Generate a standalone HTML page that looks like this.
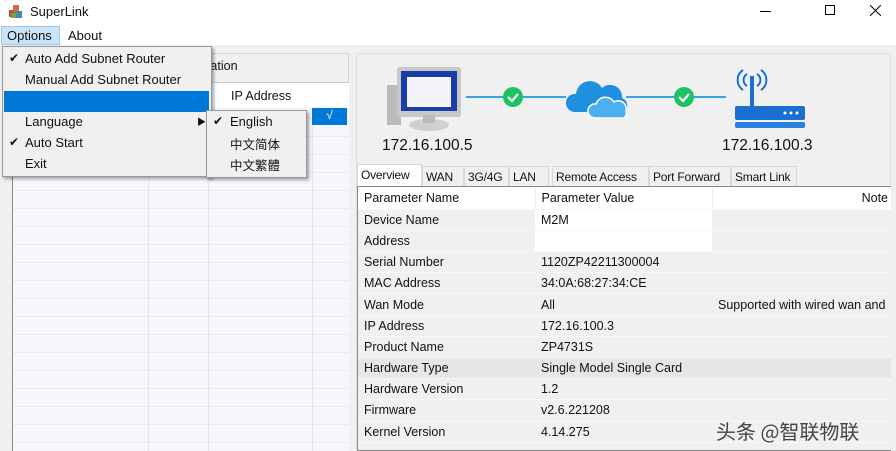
<!DOCTYPE html>
<html><head><style>
*{margin:0;padding:0;box-sizing:border-box}
body{width:896px;height:451px;overflow:hidden;background:#f0f0f0;font-family:"Liberation Sans","Noto Sans CJK SC",sans-serif;font-size:12.5px;color:#111;position:relative}
.a{position:absolute}
.title{left:0;top:0;width:896px;height:23px;background:#fff}
.menu{left:0;top:23px;width:896px;height:22px;background:#fff}
td{padding:0 6px;height:21.2px;border-bottom:1px solid #f7f7f7;white-space:nowrap;overflow:hidden}
table{border-collapse:collapse;table-layout:fixed}
.tab{position:absolute;top:166px;height:20px;border:1px solid #d9d9d9;border-bottom:none;background:#f0f0f0;padding:3px 3px;font-size:12px;white-space:nowrap;letter-spacing:-0.2px}
</style></head><body>
<div class="a title"></div>
<svg class="a" style="left:8px;top:4px" width="16" height="15"><rect x="1" y="6" width="7" height="7" fill="#c44"/><rect x="5" y="1" width="6" height="7" fill="#d64"/><rect x="7" y="7" width="7" height="7" fill="#48a"/><rect x="3" y="9" width="5" height="5" fill="#6a4"/></svg>
<div class="a" style="left:30px;top:4px;font-size:13px">SuperLink</div>
<div class="a" style="left:760px;top:11px;width:11px;height:1px;background:#000"></div>
<div class="a" style="left:825px;top:5px;width:10px;height:10px;border:1px solid #000"></div>
<svg class="a" style="left:870px;top:5px" width="11" height="11"><path d="M0 0L11 11M11 0L0 11" stroke="#000"/></svg>
<div class="a menu"></div>
<div class="a" style="left:1px;top:26px;width:59px;height:19px;background:#cce4f7;border:1px solid #99c9ef"></div>
<div class="a" style="left:7px;top:28px;font-size:13px">Options</div>
<div class="a" style="left:68px;top:28px;font-size:13px">About</div>

<!-- left panel -->
<div class="a" style="left:12px;top:53px;width:337px;height:398px;border:1px solid #d5d5d5;background:#f0f0f0"></div>
<div class="a" style="left:200px;top:59px;font-size:12.5px">mation</div>
<div class="a" style="left:12px;top:82px;width:337px;height:369px;border-left:1px solid #888;border-top:1px solid #ccc;
background:repeating-linear-gradient(#f5f7fd 0 17px,#e8eaf0 17px 18px)"></div>
<div class="a" style="left:148px;top:83px;width:1px;height:368px;background:#e5e7ee"></div>
<div class="a" style="left:208px;top:83px;width:1px;height:368px;background:#e5e7ee"></div>
<div class="a" style="left:312px;top:83px;width:1px;height:368px;background:#e5e7ee"></div>
<div class="a" style="left:13px;top:83px;width:336px;height:24px;background:#fff"></div>
<div class="a" style="left:231px;top:89px">IP Address</div>
<div class="a" style="left:312px;top:108px;width:35px;height:17px;background:#0078d7;color:#fff;text-align:center;font-size:12px">√</div>

<!-- right panel -->
<div class="a" style="left:356px;top:53px;width:535px;height:398px;background:#f0f0f0;border:1px solid #e0e0e0"></div>
<div class="a" style="left:466px;top:96px;width:100px;height:2px;background:#3aa3e8"></div>
<div class="a" style="left:626px;top:96px;width:100px;height:2px;background:#3aa3e8"></div>
<svg class="a" style="left:381px;top:63px" width="90" height="70">
<rect x="6" y="22" width="14" height="40" fill="#bbb"/><rect x="16" y="4" width="64" height="50" rx="3" fill="#c8c8c8"/><rect x="20" y="8" width="56" height="40" fill="#1a3ea8"/><rect x="26" y="14" width="44" height="30" fill="#f4f4fa"/><ellipse cx="48" cy="62" rx="20" ry="6" fill="#d0d0d0"/><rect x="42" y="52" width="12" height="8" fill="#bbb"/></svg>
<svg class="a" style="left:502px;top:86px" width="22" height="22"><circle cx="11" cy="11" r="10" fill="#1ec264"/><path d="M6 11l4 4 6-7" stroke="#fff" stroke-width="2.2" fill="none"/></svg>
<svg class="a" style="left:673px;top:86px" width="22" height="22"><circle cx="11" cy="11" r="10" fill="#1ec264"/><path d="M6 11l4 4 6-7" stroke="#fff" stroke-width="2.2" fill="none"/></svg>
<svg class="a" style="left:564px;top:76px" width="72" height="44"><path d="M10 36a9 9 0 0 1 2-18a14 14 0 0 1 26-6a12 12 0 0 1 20 10a8 8 0 0 1 2 14z" fill="#1f8fe0"/><path d="M30 42a7 7 0 0 1 2-14a10 10 0 0 1 18-2a8 8 0 0 1 12 9a6 6 0 0 1-2 7z" fill="#4ab0f0" stroke="#fff" stroke-width="1.5"/></svg>
<svg class="a" style="left:733px;top:62px" width="74" height="70">
<path d="M10 8a12 12 0 0 0 0 20M14 12a7 7 0 0 0 0 12M28 8a12 12 0 0 1 0 20M24 12a7 7 0 0 1 0 12" stroke="#1a6fd0" stroke-width="2" fill="none"/><rect x="17" y="14" width="4" height="34" fill="#1a6fd0"/>
<rect x="2" y="44" width="70" height="14" rx="2" fill="#1a6fd0"/><rect x="2" y="60" width="70" height="6" rx="2" fill="#2a80e0"/><circle cx="52" cy="51" r="1.5" fill="#fff"/><circle cx="58" cy="51" r="1.5" fill="#fff"/><circle cx="64" cy="51" r="1.5" fill="#fff"/></svg>
<div class="a" style="left:382px;top:137px;font-size:15.5px">172.16.100.5</div>
<div class="a" style="left:722px;top:137px;font-size:15.5px">172.16.100.3</div>

<div class="tab" style="left:357px;top:164px;height:23px;background:#fff;width:65px">Overview</div>
<div class="tab" style="left:422px;width:42px">WAN</div>
<div class="tab" style="left:464px;width:45px">3G/4G</div>
<div class="tab" style="left:509px;width:40px">LAN</div>
<div class="tab" style="left:552px;width:97px">Remote Access</div>
<div class="tab" style="left:649px;width:82px">Port Forward</div>
<div class="tab" style="left:731px;width:66px">Smart Link</div>

<div class="a" style="left:357px;top:186px;width:534px;height:265px;background:#fff;border:1px solid #888;border-right:none;overflow:hidden">
<table style="width:560px;font-size:12.5px;margin-top:1px">
<colgroup><col style="width:177px"><col style="width:177px"><col style="width:206px"></colgroup>
<tr style="background:#fff"><td>Parameter Name</td><td style="border-left:1px solid #eee">Parameter Value</td><td style="text-align:right;border-left:1px solid #eee;padding-right:30px">Note</td></tr>
<tr style="background:#f0f0f0"><td>Device Name</td><td style="background:#fff">M2M</td><td></td></tr>
<tr style="background:#f0f0f0"><td>Address</td><td style="background:#fff"></td><td></td></tr>
<tr style="background:#f0f0f0"><td>Serial Number</td><td>1120ZP42211300004</td><td></td></tr>
<tr style="background:#f0f0f0"><td>MAC Address</td><td>34:0A:68:27:34:CE</td><td></td></tr>
<tr style="background:#f0f0f0"><td>Wan Mode</td><td>All</td><td>Supported with wired wan and</td></tr>
<tr style="background:#f0f0f0"><td>IP Address</td><td>172.16.100.3</td><td></td></tr>
<tr style="background:#f0f0f0"><td>Product Name</td><td>ZP4731S</td><td></td></tr>
<tr style="background:#e6e6e6"><td>Hardware Type</td><td>Single Model Single Card</td><td></td></tr>
<tr style="background:#f0f0f0"><td>Hardware Version</td><td>1.2</td><td></td></tr>
<tr style="background:#f0f0f0"><td>Firmware</td><td>v2.6.221208</td><td></td></tr>
<tr style="background:#f0f0f0"><td>Kernel Version</td><td>4.14.275</td><td></td></tr>
<tr style="background:#f0f0f0"><td></td><td></td><td></td></tr>
</table></div>
<div class="a" style="left:716px;top:416px;font-size:20px;color:#444;font-family:'Noto Sans CJK SC',sans-serif">头条 @智联物联</div>

<!-- dropdown -->
<div class="a" style="left:2px;top:46px;width:210px;height:131px;background:#f0f0f0;border:1px solid #999;box-shadow:2px 2px 3px rgba(0,0,0,.35)"></div>
<div class="a" style="left:4px;top:91px;width:205px;height:21px;background:#0078d7"></div>
<div class="a" style="left:9px;top:51px;font-size:12px">✔</div>
<div class="a" style="left:25px;top:51px;font-size:13px">Auto Add Subnet Router</div>
<div class="a" style="left:25px;top:72px;font-size:13px">Manual Add Subnet Router</div>
<div class="a" style="left:25px;top:114px;font-size:13px">Language</div>
<div class="a" style="left:197px;top:115px;font-size:9px">▶</div>
<div class="a" style="left:9px;top:135px;font-size:12px">✔</div>
<div class="a" style="left:25px;top:135px;font-size:13px">Auto Start</div>
<div class="a" style="left:25px;top:156px;font-size:13px">Exit</div>
<div class="a" style="left:206px;top:110px;width:101px;height:68px;background:#f0f0f0;border:1px solid #999;box-shadow:2px 2px 3px rgba(0,0,0,.35)"></div>
<div class="a" style="left:213px;top:114px;font-size:12px">✔</div>
<div class="a" style="left:230px;top:114px;font-size:13px">English</div>
<div class="a" style="left:230px;top:134px;font-size:12.5px">中文简体</div>
<div class="a" style="left:230px;top:155px;font-size:12.5px">中文繁體</div>
</body></html>
